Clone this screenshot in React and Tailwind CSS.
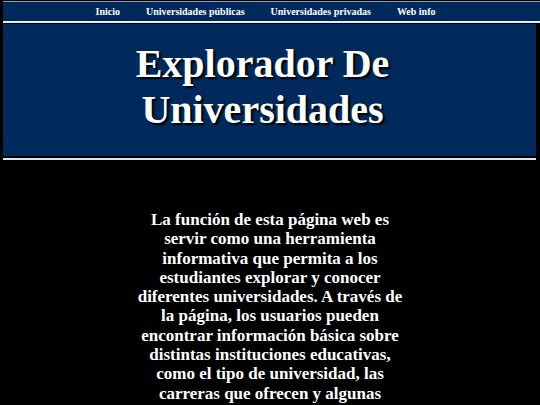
export default function App() {
  const serif = { fontFamily: '"Liberation Serif", "Times New Roman", serif' };
  return (
    <div className="min-h-screen w-full bg-black pt-px" style={serif}>
      <nav className="ml-[3px] flex h-[22px] items-center justify-center gap-[26px] border-t border-t-[#8a9bb5] border-b-2 border-b-[#e8edf3] bg-[#002a5c] pr-[12px] text-[10px] font-bold text-white">
        <a>Inicio</a>
        <a>Universidades públicas</a>
        <a>Universidades privadas</a>
        <a>Web info</a>
      </nav>
      <header className="ml-[3px] mr-[4px] mt-px flex h-[132px] flex-col items-center justify-center bg-[#002a5c] pr-[14px] pb-[6px]">
        <h1
          className="text-center text-[40px] font-bold leading-[46px] text-white"
          style={{ textShadow: '2px 2px 2px #000' }}
        >
          Explorador De
          <br />
          Universidades
        </h1>
      </header>
      <div className="ml-[3px] mr-[4px] mt-[2px] h-[2px] bg-[#dfe5ee]" />
      <main className="flex justify-center pt-[50px]">
        <p className="w-[274px] text-center text-[17px] font-bold leading-[19.3px] text-white">
          La función de esta página web es servir como una herramienta informativa que permita a los estudiantes explorar y conocer diferentes universidades. A través de la página, los usuarios pueden encontrar información básica sobre distintas instituciones educativas, como el tipo de universidad, las carreras que ofrecen y algunas características importantes.
        </p>
      </main>
    </div>
  );
}
